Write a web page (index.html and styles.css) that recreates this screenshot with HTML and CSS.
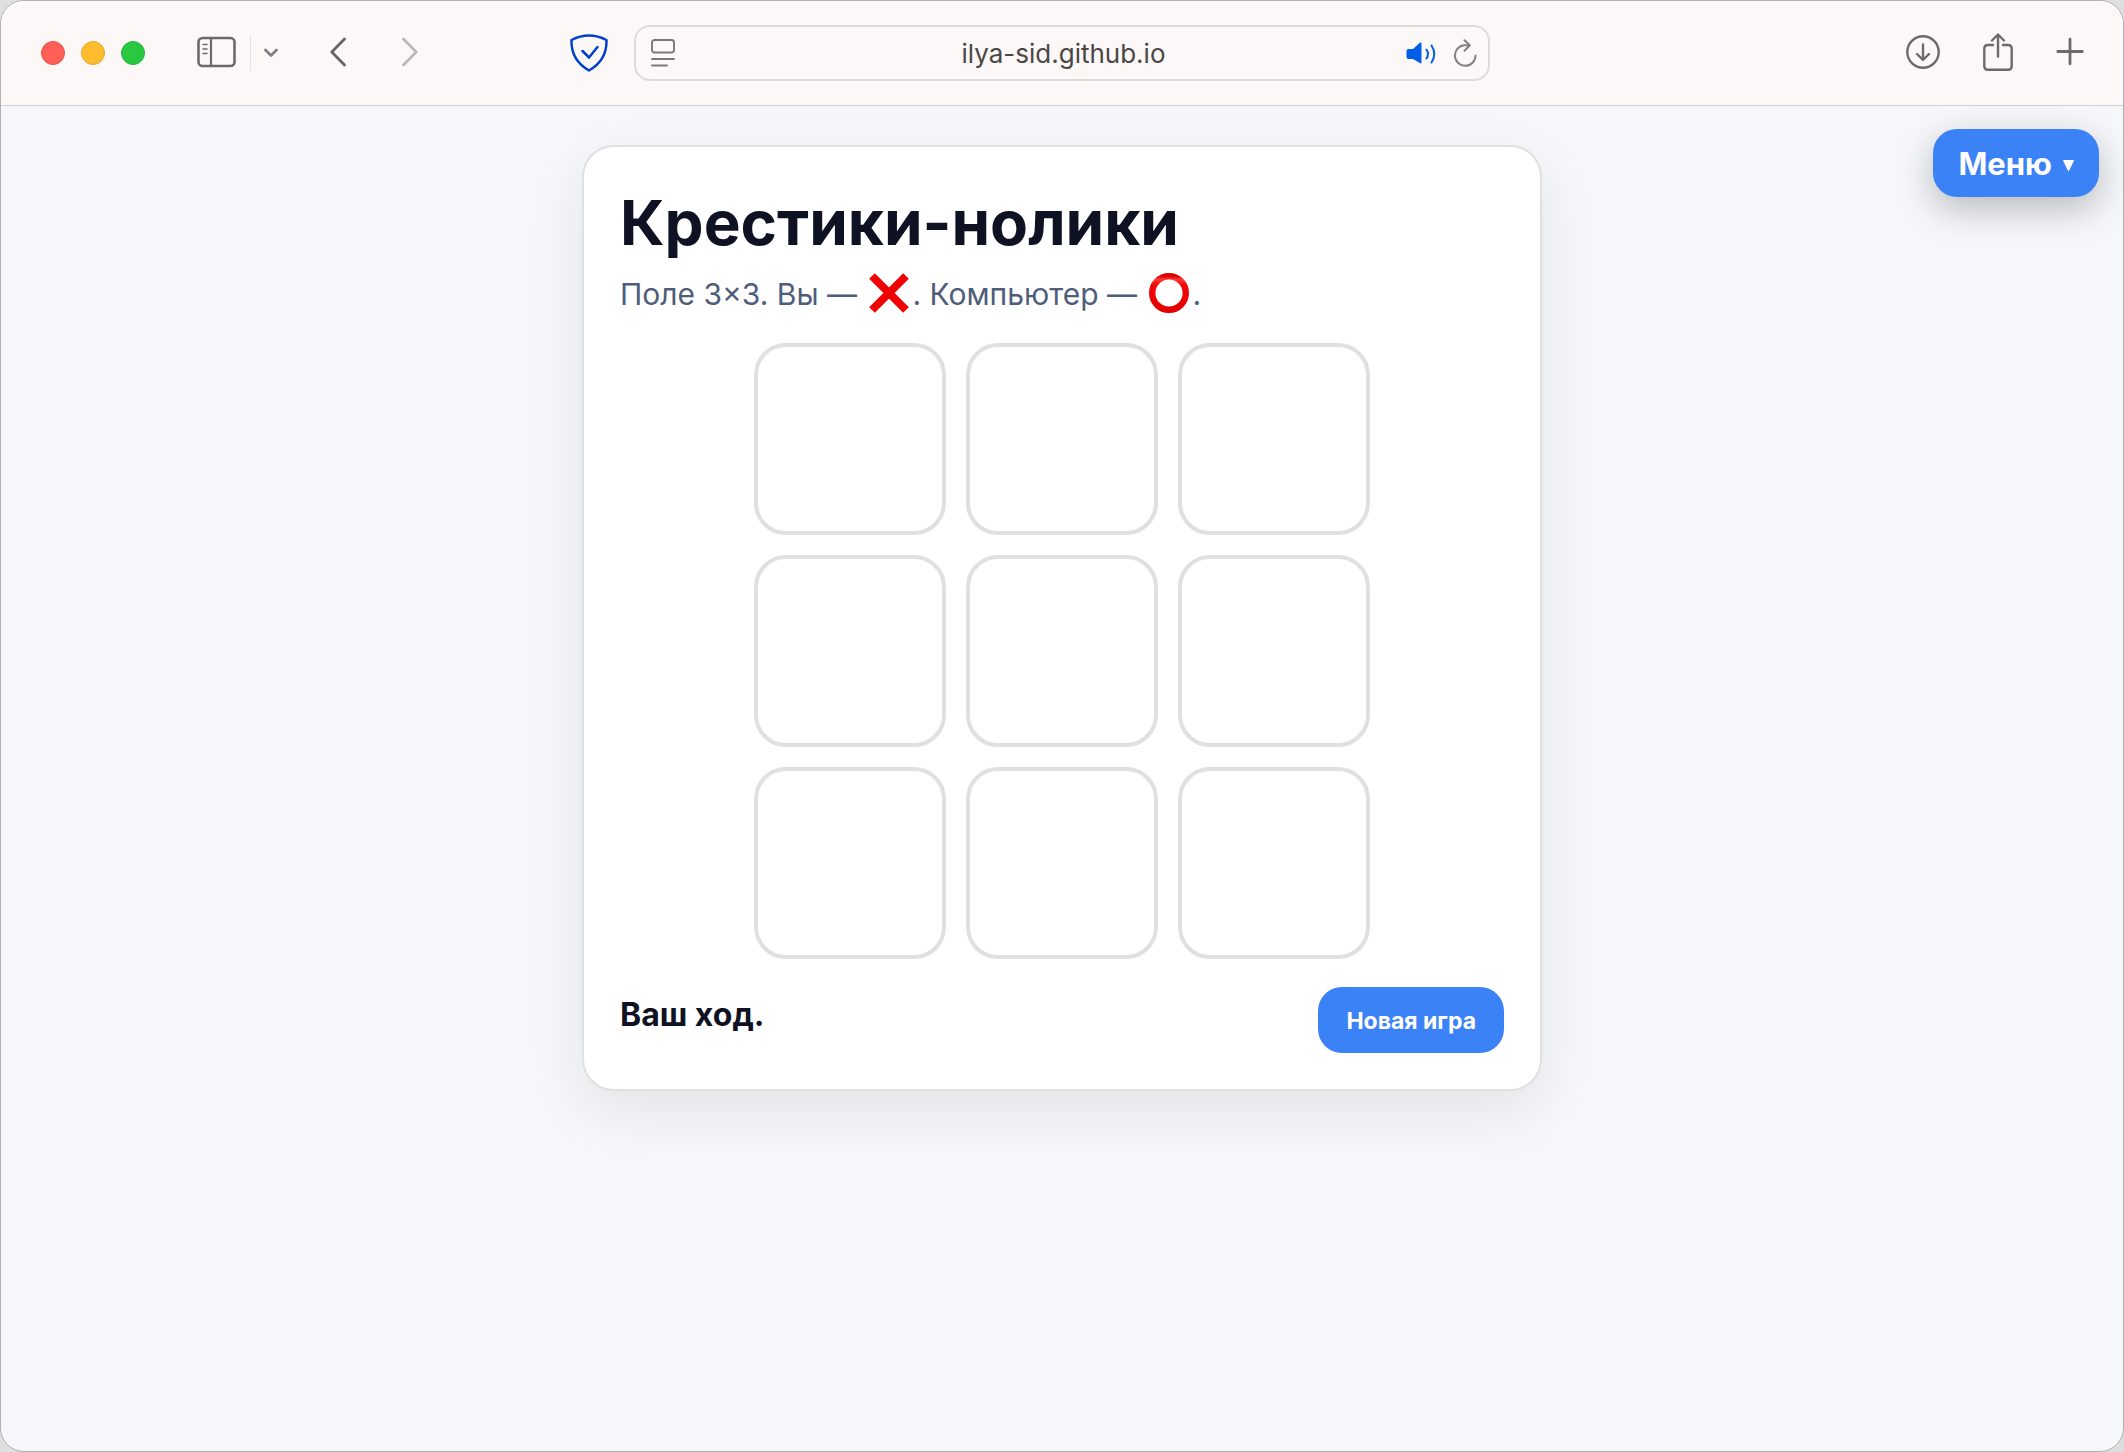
FILE: index.html
```html
<!DOCTYPE html>
<html lang="ru">
<head>
<meta charset="utf-8">
<meta name="viewport" content="width=device-width, initial-scale=1">
<title>Крестики-нолики</title>
<link rel="stylesheet" href="styles.css">
</head>
<body>
<div class="window">
  <header class="toolbar">
    <div class="toolbar-left">
      <div class="lights">
        <button class="light light-close" type="button" aria-label="Закрыть"></button>
        <button class="light light-min" type="button" aria-label="Свернуть"></button>
        <button class="light light-max" type="button" aria-label="Развернуть"></button>
      </div>
      <div class="sidebar-tools">
        <button class="icon-btn" type="button" aria-label="Боковая панель">
          <svg width="40" height="34" viewBox="0 0 40 34" fill="none" stroke="#6f6a69" stroke-linecap="round"><rect x="1.5" y="2" width="36" height="28" rx="4" stroke-width="2.6"/><path d="M14 2v28" stroke-width="2.2"/><path d="M6 8.500h4M6 13h4M6 17.500h4" stroke-width="1.600"/></svg>
        </button>
        <span class="divider"></span>
        <button class="icon-btn" type="button" aria-label="Группы вкладок">
          <svg width="14" height="12" viewBox="0 0 14 12" fill="none" stroke="#858087" stroke-width="2.800" stroke-linecap="round" stroke-linejoin="round"><path d="M1.500 3l5.500 5.500L12.500 3"/></svg>
        </button>
      </div>
      <nav class="history">
        <button class="icon-btn" type="button" aria-label="Назад">
          <svg width="16" height="32" viewBox="0 0 16 32" fill="none" stroke="#6a6564" stroke-width="2.800" stroke-linecap="round" stroke-linejoin="round"><path d="M14.500 2L1.800 15l12.700 13"/></svg>
        </button>
        <button class="icon-btn" type="button" aria-label="Вперёд" disabled>
          <svg width="16" height="32" viewBox="0 0 16 32" fill="none" stroke="#bcb8b7" stroke-width="2.800" stroke-linecap="round" stroke-linejoin="round"><path d="M1.500 2l12.700 13L1.500 28"/></svg>
        </button>
      </nav>
      <button class="icon-btn shield" type="button" aria-label="Защита">
        <svg width="38" height="38" viewBox="0 0 38 38" fill="none" stroke="#0040cc" stroke-width="2.500" stroke-linecap="round" stroke-linejoin="round"><path d="M1.500 6C13 .2 25 .2 36.500 6c.4 13-5 23.500-17.500 30.500C6.500 29.500 1.100 19 1.500 6z"/><path d="M12.500 17l6.500 6.500L27.500 13"/></svg>
      </button>
    </div>
    <div class="address">
      <button class="icon-btn" type="button" aria-label="Режим чтения">
        <svg width="24" height="28" viewBox="0 0 24 28" fill="none" stroke="#7d7978" stroke-width="1.900" stroke-linecap="round"><rect x="1" y="1" width="22" height="12.500" rx="2.500"/><path d="M1 20h22M1 26.500h15"/></svg>
      </button>
      <input class="url" type="text" value="ilya-sid.github.io" aria-label="Адрес">
      <button class="icon-btn" type="button" aria-label="Звук">
        <svg width="30" height="24" viewBox="0 0 30 24" fill="none" stroke="#005fe6" stroke-linecap="round"><path d="M2.500 8H7l6-5.500Q15.500.5 15.500 3v18q0 2.500-2.500.5L7 18H2.500Q.5 18 .5 16v-6q0-2 2-2z" fill="#005fe6" stroke="none"/><path d="M20.500 8.500q3 4.500 0 9M25.500 4.500q5.500 8.500 0 17" stroke-width="2"/></svg>
      </button>
      <button class="icon-btn" type="button" aria-label="Обновить">
        <svg width="24" height="28" viewBox="0 0 24 28" fill="none" stroke="#858180" stroke-width="2" stroke-linecap="round" stroke-linejoin="round"><path d="M16 6.200h-4.500A10.300 10.300 0 1 0 22.500 16.500M11.500 1.200l5.300 5.100-5.300 5.500"/></svg>
      </button>
    </div>
    <div class="toolbar-right">
      <button class="icon-btn" type="button" aria-label="Загрузки">
        <svg width="34" height="34" viewBox="0 0 34 34" fill="none" stroke="#6f6a69" stroke-width="2.400" stroke-linecap="round" stroke-linejoin="round"><circle cx="17" cy="17" r="15.700"/><path d="M17 9.500v15M11 19l6 6 6-6"/></svg>
      </button>
      <button class="icon-btn" type="button" aria-label="Поделиться">
        <svg width="30" height="38" viewBox="0 0 30 38" fill="none" stroke="#6f6a69" stroke-width="2.400" stroke-linecap="round" stroke-linejoin="round"><path d="M10 12H5q-3.700 0-3.700 3.700v17.500Q1.300 36.800 5 36.800h20q3.700 0 3.700-3.600V15.700Q28.700 12 25 12h-5"/><path d="M15 23.500V2M9 7.500L15 1.500l6 6"/></svg>
      </button>
      <button class="icon-btn" type="button" aria-label="Новая вкладка">
        <svg width="28" height="30" viewBox="0 0 28 30" fill="none" stroke="#6f6a69" stroke-width="2.800" stroke-linecap="round"><path d="M1.800 14.500h24.500M14 2.200v24.600"/></svg>
      </button>
    </div>
  </header>

  <div class="page">
    <button class="menu-btn" type="button" aria-haspopup="true">Меню
      <svg width="11" height="11" viewBox="0 0 11 11" fill="#fff" aria-hidden="true"><path d="M.8 0h9.400q1.200 0 .6 1.100L6.300 10.200q-.8 1.400-1.600 0L.2 1.100Q-.4 0 .8 0z"/></svg>
    </button>
    <main class="card">
      <h1 class="title">Крестики-нолики</h1>
      <p class="subtitle">Поле 3×3. Вы — <svg class="mark" width="40" height="40" viewBox="0 0 40 40" role="img" aria-label="крестик"><path d="M3 3l34 34M37 3L3 37" stroke="#f00000" stroke-width="8"/></svg>. Компьютер — <svg class="mark" width="40" height="40" viewBox="0 0 40 40" role="img" aria-label="нолик"><defs><linearGradient id="ring" x1="0" y1="0" x2="0" y2="1"><stop offset="0" stop-color="#e00000"/><stop offset=".1" stop-color="#fb3b36"/><stop offset=".25" stop-color="#f00808"/><stop offset="1" stop-color="#e40000"/></linearGradient></defs><circle cx="20" cy="20" r="16.800" fill="none" stroke="url(#ring)" stroke-width="6.400"/></svg>.</p>
      <div class="board">
        <button class="cell" type="button" aria-label="Клетка 1"></button>
        <button class="cell" type="button" aria-label="Клетка 2"></button>
        <button class="cell" type="button" aria-label="Клетка 3"></button>
        <button class="cell" type="button" aria-label="Клетка 4"></button>
        <button class="cell" type="button" aria-label="Клетка 5"></button>
        <button class="cell" type="button" aria-label="Клетка 6"></button>
        <button class="cell" type="button" aria-label="Клетка 7"></button>
        <button class="cell" type="button" aria-label="Клетка 8"></button>
        <button class="cell" type="button" aria-label="Клетка 9"></button>
      </div>
      <div class="footer">
        <p class="status">Ваш ход.</p>
        <button class="new-game" type="button">Новая игра</button>
      </div>
    </main>
  </div>
</div>
</body>
</html>
```
FILE: styles.css
```css
* {
  box-sizing: border-box;
}

body {
  margin: 0;
  background: #dededf;
  color: #0f1222;
  font-family: Inter, "Noto Sans", sans-serif;
}

button {
  padding: 0;
  border: 0;
  background: none;
  color: inherit;
  font: inherit;
}

svg {
  display: block;
}

.window {
  display: flex;
  flex-direction: column;
  min-height: 100vh;
  border: 1px solid #b0b0b0;
  border-radius: 24px;
  overflow: hidden;
  background: #f5f7fb;
}

/* Browser toolbar */
.toolbar {
  display: grid;
  grid-template-columns: 1fr minmax(0, 856px) 1fr;
  align-items: center;
  height: 105px;
  border-bottom: 1px solid #cfcfd2;
  background: #fcf8f7;
}

.toolbar-left,
.toolbar-right,
.lights,
.sidebar-tools,
.history {
  display: flex;
  align-items: center;
}

.toolbar-left {
  padding: 0 26px 0 40px;
}

.lights {
  gap: 16px;
}

.light {
  width: 24px;
  height: 24px;
  border: 1px solid;
  border-radius: 50%;
}

.light-close {
  background: #ff5f57;
  border-color: #e9524b;
}

.light-min {
  background: #febc2e;
  border-color: #e5a72a;
}

.light-max {
  background: #28c840;
  border-color: #24b43a;
}

.sidebar-tools {
  gap: 13px;
  margin-left: 52px;
}

.divider {
  width: 1px;
  height: 36px;
  background: #e6e2e2;
}

.history {
  gap: 56px;
  margin-left: 52px;
}

.shield {
  margin-left: auto;
}

.address {
  display: flex;
  align-items: center;
  gap: 17px;
  height: 56px;
  padding: 0 11px 0 15px;
  border: 2px solid #dedad9;
  border-radius: 16px;
}

.url {
  flex: 1;
  min-width: 0;
  padding: 2px 0 0 46px;
  border: 0;
  outline: 0;
  background: transparent;
  color: #4a4746;
  font: 400 26px/32px Inter, "Noto Sans", sans-serif;
  text-align: center;
}

.toolbar-right {
  justify-content: flex-end;
  gap: 43px;
  padding: 0 39px 2px 0;
}

/* Page */
.page {
  position: relative;
  flex: 1;
  padding: 39px 24px;
}

.menu-btn {
  position: absolute;
  top: 23px;
  right: 24px;
  display: flex;
  align-items: center;
  gap: 11px;
  height: 68px;
  padding: 0 25px;
  border-radius: 24px;
  background: #3b82f6;
  box-shadow: 0 12px 36px rgba(0, 0, 0, 0.25);
  color: #fff;
  font-size: 31px;
  font-weight: 700;
}

.menu-btn svg {
  margin-top: 5px;
}

.card {
  max-width: 960px;
  margin: 0 auto;
  padding: 36px;
  border: 2px solid #e0e0e0;
  border-radius: 32px;
  background: #fff;
  box-shadow: 0 20px 60px rgba(0, 0, 0, 0.08);
}

.title {
  margin: 0 0 7px;
  font-size: 62px;
  line-height: 80px;
  font-weight: 700;
}

.subtitle {
  margin: 0 0 25px;
  color: #4f5d7c;
  font-size: 30px;
  line-height: 48px;
}

.mark {
  display: inline-block;
  margin: 0 3px 0 4px;
  vertical-align: -8px;
}

.board {
  display: grid;
  grid-template-columns: repeat(3, minmax(0, 192px));
  justify-content: center;
  gap: 20px;
}

.cell {
  aspect-ratio: 1;
  border: 4px solid #e0e0e0;
  border-radius: 32px;
  background: #fff;
}

.footer {
  display: flex;
  align-items: flex-start;
  justify-content: space-between;
  margin-top: 28px;
}

.status {
  margin: 0;
  font-size: 32px;
  line-height: 56px;
  font-weight: 700;
}

.new-game {
  height: 66px;
  padding: 2px 28px 0;
  border-radius: 24px;
  background: #3b82f6;
  color: #fff;
  font-size: 23px;
  font-weight: 700;
}
```
